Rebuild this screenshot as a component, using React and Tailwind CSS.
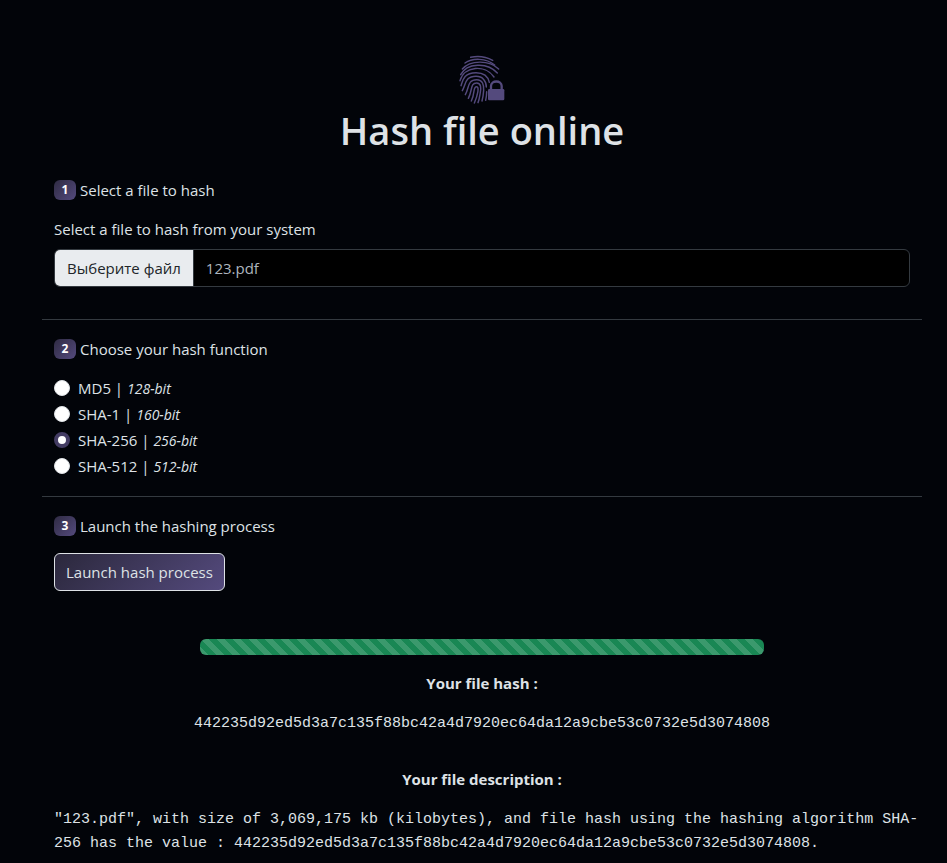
import { useState } from "react";

const HASH = "442235d92ed5d3a7c135f88bc42a4d7920ec64da12a9cbe53c0732e5d3074808";

const ALGORITHMS = [
  { id: "md5", name: "MD5", bits: "128-bit" },
  { id: "sha1", name: "SHA-1", bits: "160-bit" },
  { id: "sha256", name: "SHA-256", bits: "256-bit" },
  { id: "sha512", name: "SHA-512", bits: "512-bit" },
];

function FingerprintLock() {
  return (
    <svg viewBox="27 30 141 147" className="h-[49px] w-[47px]" fill="none" aria-hidden="true">
      <g stroke="#544a7d" strokeWidth="4.4" strokeLinecap="round">
        <path d="M62 37Q96 29 128 46" />
        <path d="M45 54C66 39 108 38 134 60" />
        <path d="M37 72C60 45 118 44 146 72" />
        <path d="M32 89C50 54 112 50 142 84" />
        <path d="M30 107C42 62 106 58 132 96" />
        <path d="M33 122C38 108 40 83 78 83C104 83 115 98 118 112" />
        <path d="M37 137C48 118 44 94 78 94C98 94 109 108 109 126" />
        <path d="M46 149C58 128 52 104 80 104C98 104 102 120 101 136C100 150 98 160 96 168" />
        <path d="M55 160C68 136 60 114 80 114C94 114 93 130 91 142C89 154 88 164 84 173" />
        <path d="M64 168C76 144 68 125 80 125C88 125 84 148 73 174" />
        <path d="M110 140Q110 152 107 166" />
      </g>
      <path d="M123 134V123C123 105 155 105 155 123V134" stroke="#544a7d" strokeWidth="7" />
      <rect x="114" y="132" width="49" height="34" rx="4" fill="#544a7d" />
    </svg>
  );
}

function Step({ number, children }) {
  return (
    <h2 className="flex items-center gap-1 leading-6">
      <span className="flex h-5 w-[22px] items-center justify-center rounded-md bg-linear-[135deg] from-[#2f2b43] to-[#544a7d] text-xs font-bold text-white">
        {number}
      </span>
      {children}
    </h2>
  );
}

export default function App() {
  const [algorithm, setAlgorithm] = useState("sha256");
  const [fileName, setFileName] = useState("123.pdf");

  return (
    <div className="min-h-screen bg-[#020409] pt-[55px] pr-[25px] pb-1 pl-[42px] font-['Open_Sans','Noto_Sans',sans-serif] text-[15px] leading-6 text-[#dee2e6]">
      <header className="flex flex-col items-center gap-[2px]">
        <FingerprintLock />
        <h1 className="text-[38px] leading-[48px] font-semibold">Hash file online</h1>
      </header>

      <main>
        <section className="border-b border-[#343a40] px-3 pt-6 pb-8">
          <Step number="1">Select a file to hash</Step>
          <label className="mt-[15px] block" htmlFor="file">
            Select a file to hash from your system
          </label>
          <label
            htmlFor="file"
            className="mt-2 flex h-[38px] cursor-pointer items-stretch overflow-hidden rounded-md border border-[#343a40] bg-black focus-within:border-[#544a7d]"
          >
            <span className="flex items-center border-r border-[#343a40] bg-[#e9ecef] px-3 text-[#212529]">
              Выберите файл
            </span>
            <span className="flex items-center px-3 text-[#adb5bd]">{fileName}</span>
            <input
              id="file"
              type="file"
              className="sr-only"
              onChange={(e) => setFileName(e.target.files[0]?.name ?? "")}
            />
          </label>
        </section>

        <section className="border-b border-[#343a40] px-3 pt-[17px] pb-[17px]">
          <Step number="2">Choose your hash function</Step>
          <div className="mt-[14px]">
            {ALGORITHMS.map(({ id, name, bits }) => (
              <div key={id} className="flex h-[26px] items-center gap-2">
                <input
                  id={id}
                  type="radio"
                  name="algorithm"
                  checked={algorithm === id}
                  onChange={() => setAlgorithm(id)}
                  className="size-4 appearance-none rounded-full border border-[#dee2e6] bg-white checked:border-[4px] checked:border-[#433c63]"
                />
                <label htmlFor={id}>
                  {name} | <em className="text-sm">{bits}</em>
                </label>
              </div>
            ))}
          </div>
        </section>

        <section className="px-3 pt-[17px]">
          <Step number="3">Launch the hashing process</Step>
          <button
            type="button"
            className="mt-[15px] h-[38px] rounded-md border border-[#dee2e6] bg-linear-[135deg] from-[#2b283c] to-[#544a7d] px-[11px]"
          >
            Launch hash process
          </button>
        </section>

        <section className="px-3 pt-12">
          <div className="flex flex-col items-center">
            <div
              role="progressbar"
              aria-label="Hashing progress"
              aria-valuenow={100}
              className="h-4 w-[564px] max-w-full rounded-md bg-[#198754] bg-[linear-gradient(45deg,rgba(255,255,255,0.15)_25%,transparent_25%,transparent_50%,rgba(255,255,255,0.15)_50%,rgba(255,255,255,0.15)_75%,transparent_75%,transparent)] bg-[length:16px_16px]"
            />
            <h3 className="mt-4 font-bold">Your file hash :</h3>
            <p className="mt-[17px] font-['Liberation_Mono',monospace]">{HASH}</p>
            <h3 className="mt-[31px] font-bold">Your file description :</h3>
          </div>
          <p className="mt-[17px] -mr-3 font-['Liberation_Mono',monospace]">
            {`"${fileName}", with size of 3,069,175 kb (kilobytes), and file hash using the hashing algorithm SHA-256 has the value : ${HASH}.`}
          </p>
        </section>
      </main>
    </div>
  );
}
